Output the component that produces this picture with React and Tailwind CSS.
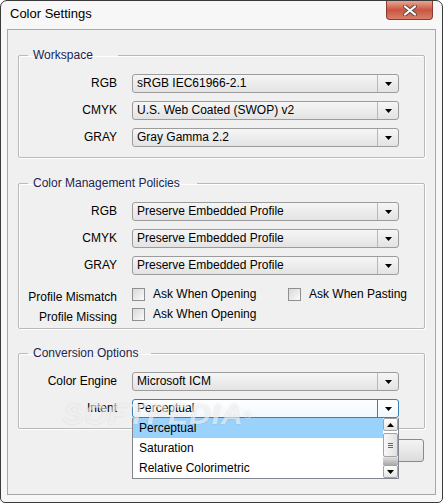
import React from 'react';

const Arrow = () => (
  <svg width="7" height="4" viewBox="0 0 7 4">
    <path d="M0 0h7L3.5 4z" fill="#000" />
  </svg>
);

function Combo({ value, focused }) {
  return (
    <div
      className={`flex h-[19px] w-[267px] items-stretch rounded-[3px] border ${
        focused
          ? 'border-[#3c7fb1] bg-gradient-to-b from-[#fdfeff] to-[#f3f8fc]'
          : 'border-[#9c9c9c] bg-gradient-to-b from-[#f6f6f6] to-[#e3e3e3]'
      }`}
    >
      <span className="flex-1 truncate pl-[4px] text-[12px] leading-[17px] text-black">{value}</span>
      <span
        className={`flex w-[21px] items-center justify-center border-l ${
          focused ? 'border-[#3c7fb1]' : 'border-[#b8b8b8]'
        }`}
      >
        <Arrow />
      </span>
    </div>
  );
}

function Group({ title, pr, children }) {
  return (
    <fieldset className="rounded-[2px] border border-[#b9b9b9] shadow-[1px_1px_0_#ffffff,inset_1px_1px_0_#ffffff]">
      <legend className={`ml-[9px] pl-[5px] ${pr} text-[12px] leading-[14px] text-[#1b2550]`}>{title}</legend>
      {children}
    </fieldset>
  );
}

function Row({ label, children }) {
  return (
    <>
      <span className="text-right text-[12px] leading-[19px] text-black">{label}</span>
      {children}
    </>
  );
}

const Box = () => (
  <span className="h-[13px] w-[13px] shrink-0 border border-[#8e8f8f] bg-gradient-to-br from-[#d9d9d9] to-[#fbfbfb]" />
);

function Check({ text }) {
  return (
    <span className="flex items-center gap-[8px]">
      <Box />
      <span className="text-[12px] leading-[14px] text-black">{text}</span>
    </span>
  );
}

function ScrollBar() {
  return (
    <div className="flex w-[15px] flex-col bg-white">
      <div className="flex h-[13px] items-center justify-center rounded-[2px] border border-[#a3a3a3] bg-gradient-to-b from-white to-[#e4e4e4]">
        <svg width="7" height="4" viewBox="0 0 7 4">
          <path d="M3.5 0L7 4H0z" fill="#000" />
        </svg>
      </div>
      <div className="mt-[2px] flex h-[24px] flex-col items-center justify-center gap-[1px] rounded-[2px] border border-[#a3a3a3] bg-gradient-to-r from-[#f8f8f8] to-[#e2e2e2]">
        <span className="h-px w-[5px] bg-[#666]" />
        <span className="h-px w-[5px] bg-[#666]" />
        <span className="h-px w-[5px] bg-[#666]" />
      </div>
      <div className="flex-1 bg-gradient-to-b from-[#e2e2e2] to-[#a9a9a9]" />
      <div className="flex h-[13px] items-center justify-center rounded-[2px] border border-[#a3a3a3] bg-gradient-to-b from-white to-[#e4e4e4]">
        <Arrow />
      </div>
    </div>
  );
}

export default function App() {
  return (
    <div className="relative flex h-[503px] w-[443px] flex-col overflow-hidden rounded-t-[7px] rounded-b-[5px] border border-[#3a3a3a] bg-[#f7f7f7] font-['Liberation_Sans',Arial,sans-serif]">
      {/* Title bar */}
      <div className="flex h-[28px] shrink-0 items-start pl-[9px] pt-[5px]">
        <span className="text-[13px] leading-[16px] text-black">Color Settings</span>
      </div>
      <div className="absolute right-[9px] top-0 flex h-[19px] w-[47px] items-center justify-center rounded-b-[4px] border border-t-0 border-[#8a3a2e] bg-gradient-to-b from-[#e8a493] via-[#c9553f] to-[#d9806a]">
        <svg width="14" height="11" viewBox="0 0 14 11">
          <path d="M2 1.5L12 9.5M12 1.5L2 9.5" stroke="#5a4a48" strokeWidth="4" strokeLinecap="round" />
          <path d="M2 1.5L12 9.5M12 1.5L2 9.5" stroke="#ffffff" strokeWidth="2.2" strokeLinecap="round" />
        </svg>
      </div>

      {/* Client area */}
      <div className="mx-[6px] mb-[7px] flex flex-1 flex-col border border-[#a7a7a7] bg-[#f0f0f0] px-[10px] pt-[18px]">
        <Group title="Workspace" pr="pr-[25px]">
          <div className="grid grid-cols-[98px_267px] items-center gap-x-[15px] gap-y-[8px] pb-[10px] pt-[12px]">
            <Row label="RGB"><Combo value="sRGB IEC61966-2.1" /></Row>
            <Row label="CMYK"><Combo value="U.S. Web Coated (SWOP) v2" /></Row>
            <Row label="GRAY"><Combo value="Gray Gamma 2.2" /></Row>
          </div>
        </Group>

        <div className="mt-[18px]">
          <Group title="Color Management Policies" pr="pr-[17px]">
            <div className="grid grid-cols-[98px_267px] items-center gap-x-[15px] gap-y-[8px] pt-[12px]">
              <Row label="RGB"><Combo value="Preserve Embedded Profile" /></Row>
              <Row label="CMYK"><Combo value="Preserve Embedded Profile" /></Row>
              <Row label="GRAY"><Combo value="Preserve Embedded Profile" /></Row>
            </div>
            <div className="mt-[9px] grid grid-cols-[98px_auto] gap-x-[15px] pb-[4px]">
              <span className="translate-y-[3px] text-right text-[12px] leading-[20px] text-black">Profile Mismatch</span>
              <div className="flex h-[20px] items-center">
                <span className="w-[156px]"><Check text="Ask When Opening" /></span>
                <Check text="Ask When Pasting" />
              </div>
              <span className="translate-y-[3px] text-right text-[12px] leading-[20px] text-black">Profile Missing</span>
              <div className="flex h-[20px] items-center">
                <Check text="Ask When Opening" />
              </div>
            </div>
          </Group>
        </div>

        <div className="mt-[17px]">
          <Group title="Conversion Options" pr="pr-[13px]">
            <div className="grid grid-cols-[98px_267px] items-center gap-x-[15px] gap-y-[8px] pb-[10px] pt-[12px]">
              <Row label="Color Engine"><Combo value="Microsoft ICM" /></Row>
              <Row label="Intent">
                <div className="relative">
                  <Combo value="Perceptual" focused />
                  <div className="absolute left-0 top-[19px] z-20 flex w-[267px] border-x border-b border-[#82878f] bg-white">
                    <div className="flex flex-1 flex-col text-[12px] leading-[20px] text-black">
                      <span className="h-[20px] bg-[#9ad2fb] pl-[6px]">Perceptual</span>
                      <span className="h-[20px] pl-[6px]">Saturation</span>
                      <span className="h-[20px] pl-[6px]">Relative Colorimetric</span>
                    </div>
                    <ScrollBar />
                  </div>
                </div>
              </Row>
            </div>
          </Group>
        </div>

        <div className="flex justify-end pr-[1px] pt-[10px]">
          <button className="h-[23px] w-[75px] rounded-[3px] border border-[#8a8a8a] bg-gradient-to-b from-[#f4f4f4] to-[#dcdcdc] text-[12px] text-black">
            OK
          </button>
        </div>
      </div>

      {/* watermark */}
      <span className="pointer-events-none absolute left-[62px] top-[396px] z-30 text-[30px] font-black italic leading-[34px] tracking-[1px] text-white/60 [text-shadow:0_0_2px_rgba(0,0,0,0.12)]">
        SOFTPEDIA<sup className="text-[10px]">®</sup>
      </span>
    </div>
  );
}
